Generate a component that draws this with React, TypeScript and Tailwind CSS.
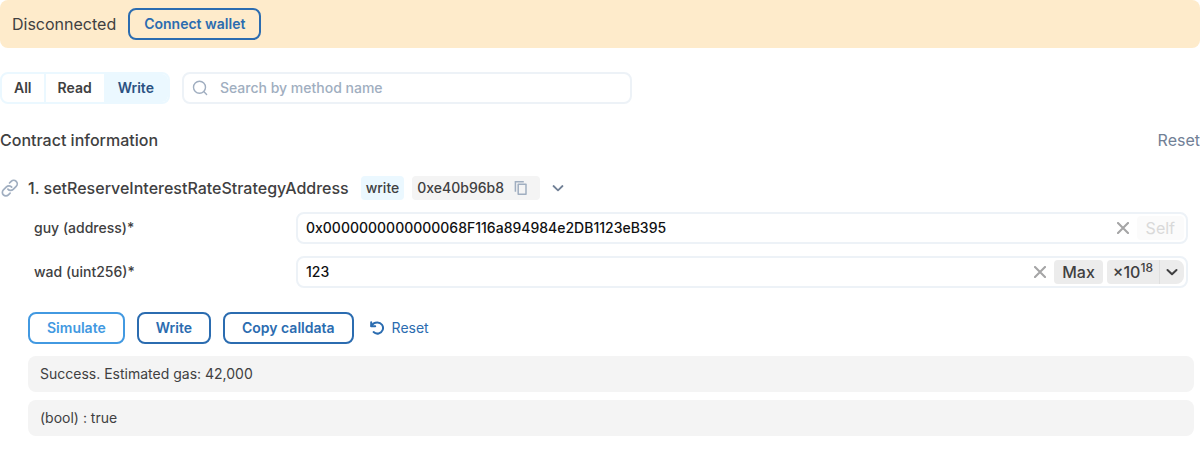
import { useId, type ReactNode } from 'react';

function SearchIcon() {
  return (
    <svg viewBox="0 0 16 16" className="size-4" fill="none" stroke="currentColor" strokeWidth="1.400" strokeLinecap="round" aria-hidden="true">
      <circle cx="7.500" cy="7.300" r="6" />
      <path d="m12 11.800 2.600 2.600" />
    </svg>
  );
}

function LinkIcon() {
  return (
    <svg viewBox="0 0 20 20" className="size-5 shrink-0" fill="none" stroke="currentColor" strokeWidth="1.700" strokeLinecap="round" strokeLinejoin="round" aria-hidden="true">
      <path d="M8.200 10.800a3.600 3.600 0 0 0 5.300.200l3-3a3.500 3.500 0 0 0-5-5l-1.700 1.700" transform="translate(-.3 .3)" />
      <path d="M11.800 9.200a3.600 3.600 0 0 0-5.300-.200l-3 3a3.500 3.500 0 0 0 5 5l1.700-1.700" transform="translate(-.1 -.1)" />
    </svg>
  );
}

function CopyIcon() {
  return (
    <svg viewBox="0 0 14 16" className="h-4 w-3.5" fill="none" stroke="currentColor" strokeWidth="1.500" aria-hidden="true">
      <path d="M1.400 11.800V1.700h8.400" />
      <path d="M4.200 4.300h7.800v9.900H4.200z" strokeLinejoin="round" />
    </svg>
  );
}

function ChevronIcon({ className }: { className: string }) {
  return (
    <svg viewBox="0 0 12 12" className={className} fill="none" stroke="currentColor" strokeLinecap="round" strokeLinejoin="round" aria-hidden="true">
      <path d="m1.500 4 4.500 4.300L10.500 4" />
    </svg>
  );
}

function CrossIcon() {
  return (
    <svg viewBox="0 0 12 12" className="size-3" stroke="currentColor" strokeWidth="2.100" strokeLinecap="round" aria-hidden="true">
      <path d="m1 1 10 10M11 1 1 11" />
    </svg>
  );
}

function ResetIcon() {
  return (
    <svg viewBox="0 0 14 14" className="size-3.5" fill="none" stroke="currentColor" strokeWidth="2" strokeLinecap="round" strokeLinejoin="round" aria-hidden="true">
      <path d="M1.200 1.300v3.900h4" />
      <path d="M1.500 5C2.500 2.700 4.700 1.400 7.300 1.400a5.600 5.600 0 1 1-3.700 9.700" />
    </svg>
  );
}

const outline = 'h-8 cursor-pointer rounded-lg border-2 text-sm font-semibold';

function Field({ label, value, children }: { label: string; value: string; children: ReactNode }) {
  const id = useId();
  return (
    <div className="flex items-center">
      <label htmlFor={id} className="w-[262px] shrink-0 text-sm font-medium">
        {label}
      </label>
      <div className="flex h-8 min-w-0 grow items-center rounded-lg border-2 border-[#edf2f7] pr-0.5 pl-2">
        <input id={id} type="text" defaultValue={value} className="min-w-0 grow bg-transparent text-sm font-medium text-[#101112] outline-none" />
        <button type="button" aria-label="Clear" className="mr-2 cursor-pointer text-[#a5a5a6]">
          <CrossIcon />
        </button>
        {children}
      </div>
    </div>
  );
}

export default function App() {
  return (
    <main className="bg-white font-['Inter',sans-serif] text-base text-[#404041]">
      <div className="flex items-center gap-3 rounded-lg bg-[#feebcb] px-3 py-2">
        <span>Disconnected</span>
        <button type="button" className={`${outline} border-[#2b6cb0] px-3.5 text-[#2b6cb0]`}>
          Connect wallet
        </button>
      </div>

      <div className="mt-6 flex items-center gap-3">
        <div className="flex h-8 overflow-hidden rounded-lg border-2 border-[#ebf8ff] text-sm font-semibold" role="group" aria-label="Method type">
          <button type="button" className="cursor-pointer px-3">All</button>
          <button type="button" className="cursor-pointer border-l-2 border-[#ebf8ff] px-3">Read</button>
          <button type="button" aria-pressed="true" className="cursor-pointer bg-[#ebf8ff] px-3.5 text-[#2c5282]">Write</button>
        </div>
        <label className="flex h-8 w-full max-w-[450px] items-center gap-3 rounded-lg border-2 border-[#edf2f7] px-2 text-[#a0aec0]">
          <SearchIcon />
          <input type="text" aria-label="Search by method name" placeholder="Search by method name" className="min-w-0 grow bg-transparent text-sm font-medium text-[#101112] outline-none placeholder:text-[#a0aec0]" />
        </label>
      </div>

      <div className="mt-6 flex items-center justify-between">
        <h2 className="font-medium">Contract information</h2>
        <button type="button" className="cursor-pointer text-[#718096]">Reset</button>
      </div>

      <section className="mt-6">
        <div className="flex items-center gap-2">
          <a href="#method-1" aria-label="Link to method" className="text-[#a0aec0]">
            <LinkIcon />
          </a>
          <h3 className="mr-1 font-medium">1. setReserveInterestRateStrategyAddress</h3>
          <span className="rounded bg-[#ebf8ff] px-[5px] text-sm leading-6 font-medium">write</span>
          <span className="flex h-6 items-center rounded bg-[#f4f4f4] pr-3 pl-[5px] text-sm font-medium">
            0xe40b96b8
            <button type="button" aria-label="Copy method id" className="ml-2.5 cursor-pointer text-[#a0aec0]">
              <CopyIcon />
            </button>
          </span>
          <button type="button" aria-label="Toggle method" className="ml-1 cursor-pointer text-[#718096]">
            <ChevronIcon className="size-3 stroke-[1.800]" />
          </button>
        </div>

        <div className="mt-3 flex flex-col gap-3 pr-3 pl-[34px]">
          <Field label="guy (address)*" value="0x0000000000000068F116a894984e2DB1123eB395">
            <button type="button" disabled className="h-6 rounded bg-[#fbfbfb] px-[9px] text-[#d9d9d9]">Self</button>
          </Field>
          <Field label="wad (uint256)*" value="123">
            <button type="button" className="h-6 cursor-pointer rounded bg-[#ececec] px-2 font-medium">Max</button>
            <div className="ml-1 flex h-6 overflow-hidden rounded-l rounded-r-lg bg-[#ececec]">
              <button type="button" className="cursor-pointer px-1.5 font-medium">
                ×10<sup className="text-xs">18</sup>
              </button>
              <button type="button" aria-label="Choose power" className="cursor-pointer border-l border-[#dfdfdf] px-1.5">
                <ChevronIcon className="size-3 stroke-2" />
              </button>
            </div>
          </Field>
        </div>

        <div className="mt-6 ml-7 flex items-center gap-3">
          <button type="button" className={`${outline} border-[#4299e1] px-[17px] text-[#4299e1]`}>Simulate</button>
          <button type="button" className={`${outline} border-[#2b6cb0] px-[17px] text-[#2b6cb0]`}>Write</button>
          <button type="button" className={`${outline} border-[#2b6cb0] px-[17px] text-[#2b6cb0]`}>Copy calldata</button>
          <button type="button" className="ml-1 flex cursor-pointer items-center gap-2 text-sm text-[#2b6cb0]">
            <ResetIcon />
            Reset
          </button>
        </div>

        <div className="mt-3 mr-1.5 ml-7 flex flex-col gap-2 text-sm">
          <output className="rounded-lg bg-[#f4f4f4] px-3 py-2">Success. Estimated gas: 42,000</output>
          <output className="rounded-lg bg-[#f4f4f4] px-3 py-2">(bool) : true</output>
        </div>
      </section>
    </main>
  );
}
